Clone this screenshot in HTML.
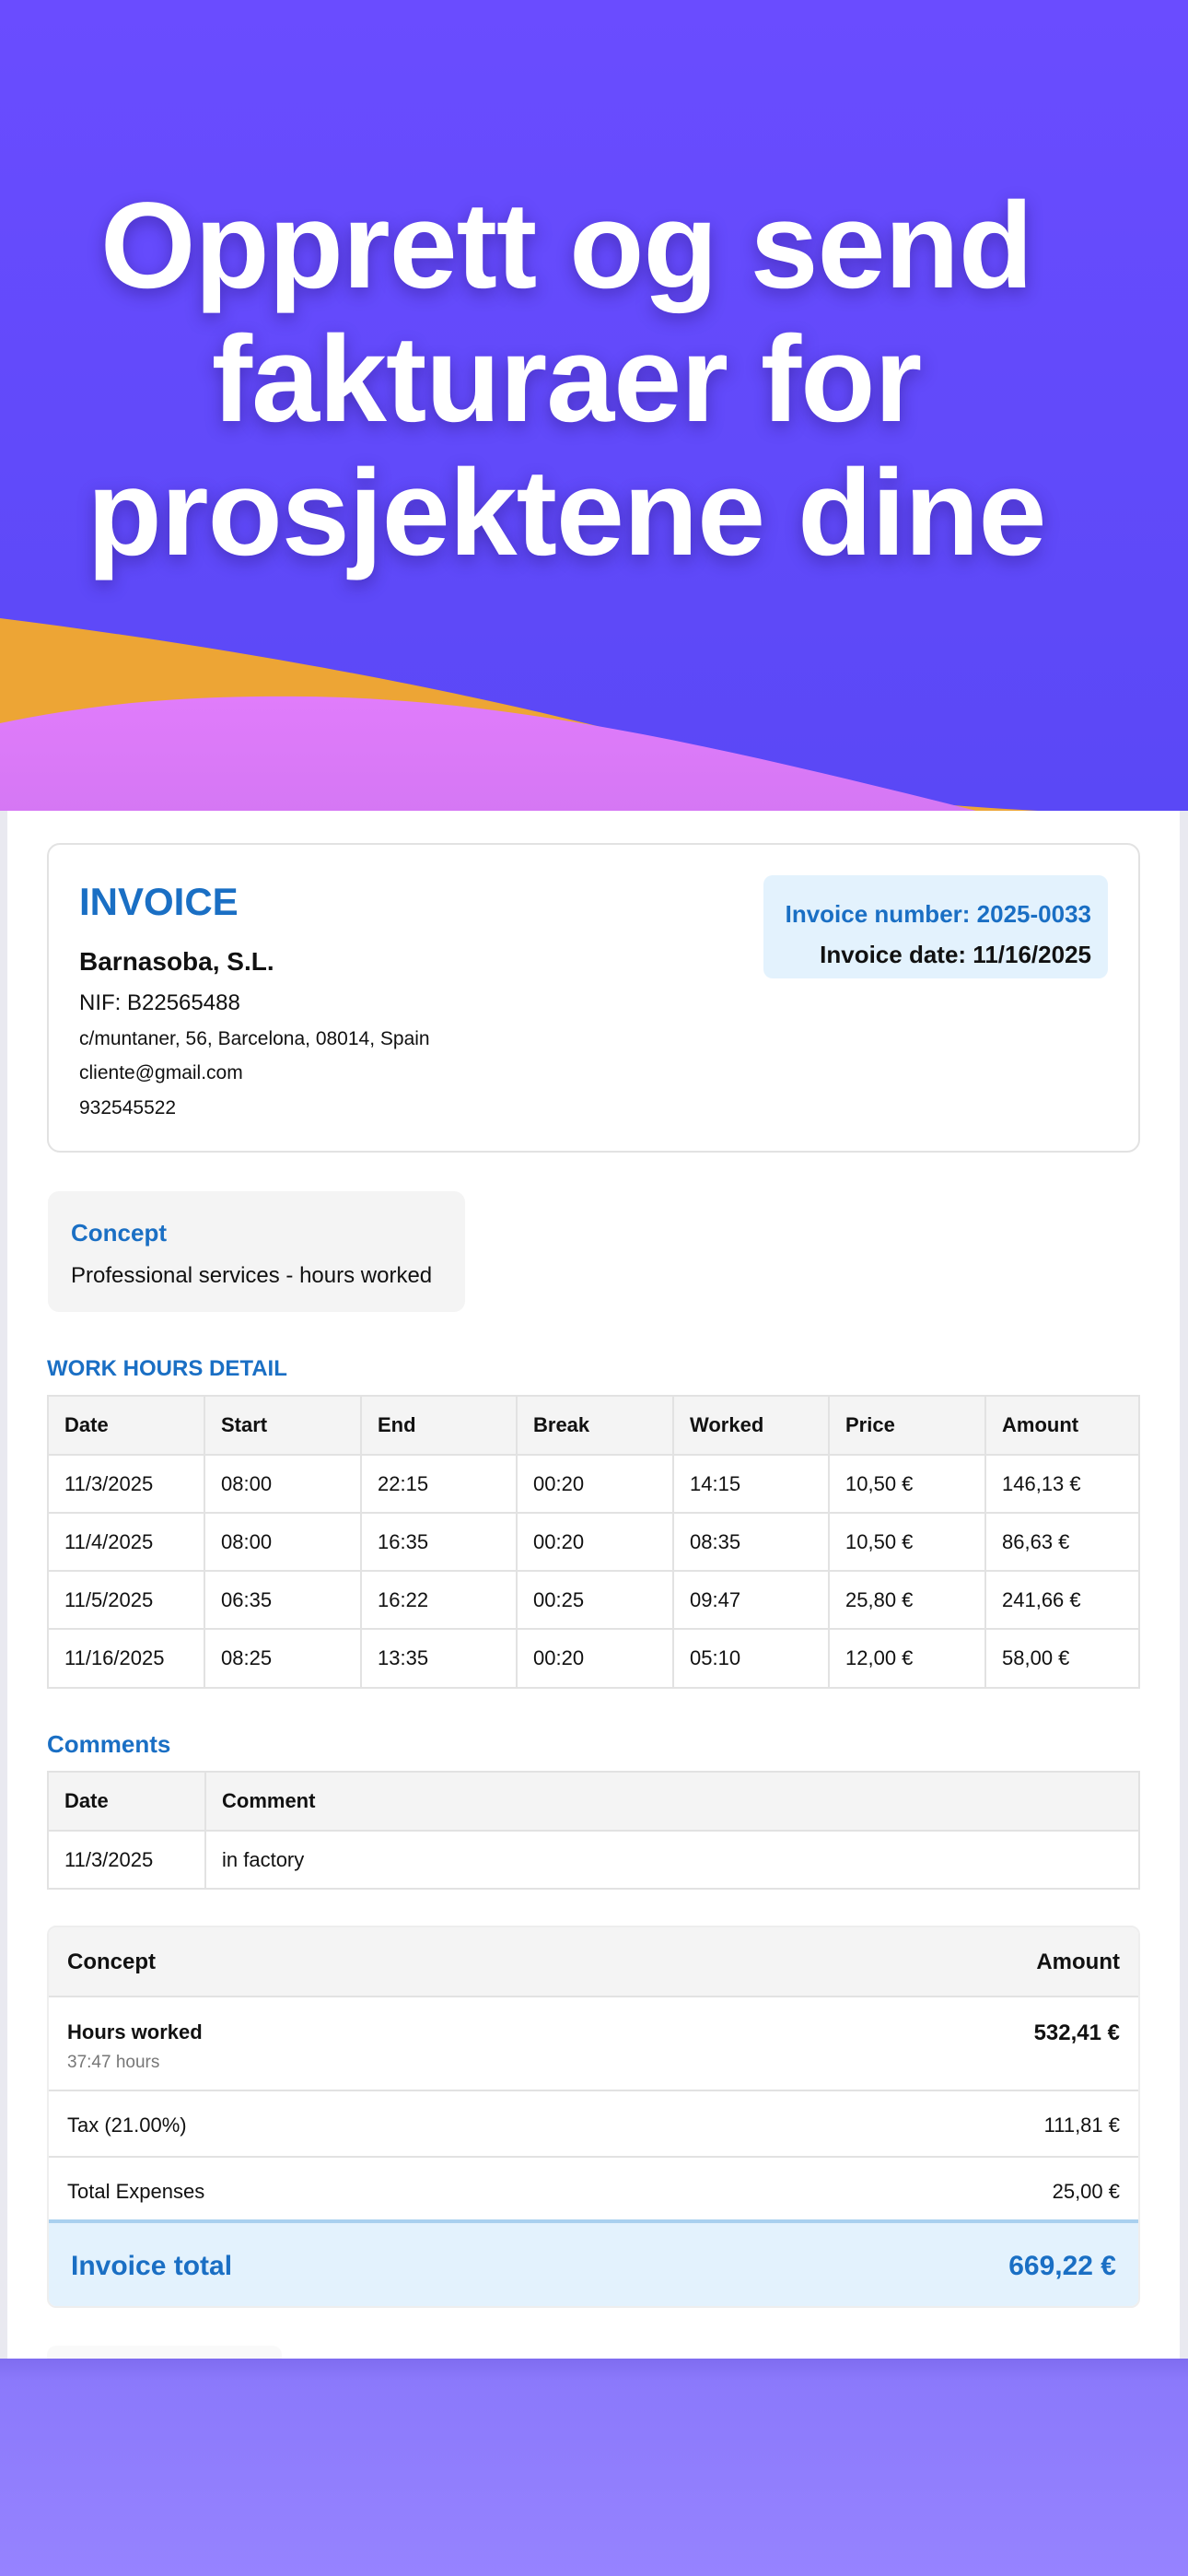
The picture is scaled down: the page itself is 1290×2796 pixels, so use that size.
<!DOCTYPE html>
<html><head><meta charset="utf-8">
<style>
*{margin:0;padding:0;box-sizing:border-box}
body{width:1290px;height:2796px;overflow:hidden;font-family:"Liberation Sans","DejaVu Sans",sans-serif;position:relative;background:#e9e9f0}
.hero{position:absolute;left:0;top:0;width:1290px;height:880px;background:linear-gradient(180deg,#6a4cff 0%,#5a48f6 100%);overflow:hidden}
.title{position:absolute;left:-30px;top:195px;width:1290px;text-align:center;color:#fff;font-weight:bold;font-size:133px;line-height:145px;letter-spacing:-1px;text-shadow:0 6px 18px rgba(40,20,120,.45)}
.sheet{position:absolute;left:8px;top:880px;width:1273px;height:1680px;background:#fff}
.bottom{position:absolute;left:0;top:2560px;width:1290px;height:236px;background:linear-gradient(180deg,#7f6cf0 0%,#8b79fb 10%,#9683ff 100%)}
.blue{color:#1a6fc4}
.card{position:absolute;left:51px;top:915px;width:1187px;height:336px;border:2px solid #e2e2e2;border-radius:14px}
.badge{position:absolute;left:829px;top:950px;width:374px;height:112px;background:#e3f2fd;border-radius:10px;text-align:right;padding:20px 18px 0 0;font-weight:bold;font-size:26px;line-height:44px}
.t{position:absolute;white-space:nowrap}
table{border-collapse:collapse;position:absolute;font-size:22px;color:#111}
td,th{border:2px solid #e2e2e2;text-align:left;padding:0 0 0 17px;font-weight:normal}
th{background:#f4f4f4;font-weight:bold}
.sum{position:absolute;left:51px;top:2090px;width:1187px;height:415px;border-radius:10px;overflow:hidden;border:2px solid #eee}
.row{position:absolute;left:0;width:100%;border-bottom:2px solid #e2e2e2;font-size:22px;color:#111}
.row .l{position:absolute;left:20px}
.row .r{position:absolute;right:20px}
</style></head><body>
<div class="hero">
<svg width="1290" height="880" style="position:absolute;left:0;top:0">
<defs><linearGradient id="pk" x1="0" y1="0" x2="0" y2="1"><stop offset="0" stop-color="#e07cfb"/><stop offset="1" stop-color="#d577f4"/></linearGradient></defs>
<path d="M0 671 C350 715 650 780 850 845 C950 870 1050 876 1127 880 L0 880 Z" fill="#eda535"/>
<path d="M0 785 C120 760 220 755 330 756 C560 758 800 815 1060 880 L0 880 Z" fill="url(#pk)"/>
</svg>
<div class="title">Opprett og send<br>fakturaer for<br>prosjektene dine</div>
</div>
<div class="sheet"></div>
<div class="bottom"></div>

<div class="card"></div>
<div class="t blue" style="left:86px;top:955px;font-size:42px;font-weight:bold">INVOICE</div>
<div class="t" style="left:86px;top:1028px;font-size:28px;font-weight:bold;color:#111">Barnasoba, S.L.</div>
<div class="t" style="left:86px;top:1075px;font-size:24px;color:#111">NIF: B22565488</div>
<div class="t" style="left:86px;top:1116px;font-size:21px;color:#111">c/muntaner, 56, Barcelona, 08014, Spain</div>
<div class="t" style="left:86px;top:1153px;font-size:21px;color:#111">cliente@gmail.com</div>
<div class="t" style="left:86px;top:1191px;font-size:21px;color:#111">932545522</div>
<div class="badge"><span class="blue">Invoice number: 2025-0033</span><br><span style="color:#111">Invoice date: 11/16/2025</span></div>

<div style="position:absolute;left:52px;top:1293px;width:453px;height:131px;background:#f4f4f4;border-radius:12px"></div>
<div class="t blue" style="left:77px;top:1323px;font-size:26px;font-weight:bold">Concept</div>
<div class="t" style="left:77px;top:1371px;font-size:24px;color:#111">Professional services - hours worked</div>

<div class="t blue" style="left:51px;top:1472px;font-size:24px;font-weight:bold">WORK HOURS DETAIL</div>
<table style="left:51px;top:1514px;width:1187px">
<colgroup><col style="width:170px"><col style="width:170px"><col style="width:169px"><col style="width:170px"><col style="width:169px"><col style="width:170px"><col></colgroup>
<tr style="height:64px"><th>Date</th><th>Start</th><th>End</th><th>Break</th><th>Worked</th><th>Price</th><th>Amount</th></tr>
<tr style="height:63px"><td>11/3/2025</td><td>08:00</td><td>22:15</td><td>00:20</td><td>14:15</td><td>10,50 €</td><td>146,13 €</td></tr>
<tr style="height:63px"><td>11/4/2025</td><td>08:00</td><td>16:35</td><td>00:20</td><td>08:35</td><td>10,50 €</td><td>86,63 €</td></tr>
<tr style="height:63px"><td>11/5/2025</td><td>06:35</td><td>16:22</td><td>00:25</td><td>09:47</td><td>25,80 €</td><td>241,66 €</td></tr>
<tr style="height:64px"><td>11/16/2025</td><td>08:25</td><td>13:35</td><td>00:20</td><td>05:10</td><td>12,00 €</td><td>58,00 €</td></tr>
</table>

<div class="t blue" style="left:51px;top:1878px;font-size:26px;font-weight:bold">Comments</div>
<table style="left:51px;top:1922px;width:1187px">
<colgroup><col style="width:171px"><col></colgroup>
<tr style="height:64px"><th>Date</th><th>Comment</th></tr>
<tr style="height:63px"><td>11/3/2025</td><td>in factory</td></tr>
</table>

<div class="sum">
<div class="row" style="top:0;height:76px;background:#f4f4f4;font-weight:bold;font-size:24px"><span class="l" style="top:24px">Concept</span><span class="r" style="top:24px">Amount</span></div>
<div class="row" style="top:76px;height:102px"><span class="l" style="top:25px;font-weight:bold">Hours worked</span><span class="l" style="top:60px;font-size:19px;color:#777">37:47 hours</span><span class="r" style="top:25px;font-weight:bold;font-size:24px">532,41 €</span></div>
<div class="row" style="top:178px;height:72px"><span class="l" style="top:24px">Tax (21.00%)</span><span class="r" style="top:24px">111,81 €</span></div>
<div class="row" style="top:250px;height:71px;border-bottom:4px solid #a9d0ef"><span class="l" style="top:24px">Total Expenses</span><span class="r" style="top:24px">25,00 €</span></div>
<div class="row" style="top:321px;height:94px;background:#e3f2fd;border:0;font-weight:bold;font-size:30px;color:#1a6fc4"><span class="l" style="top:30px;left:24px">Invoice total</span><span class="r" style="top:30px;right:24px">669,22 €</span></div>
</div>
<div style="position:absolute;left:51px;top:2546px;width:255px;height:14px;background:#f9f9f9;border-radius:10px 10px 0 0"></div>
</body></html>
